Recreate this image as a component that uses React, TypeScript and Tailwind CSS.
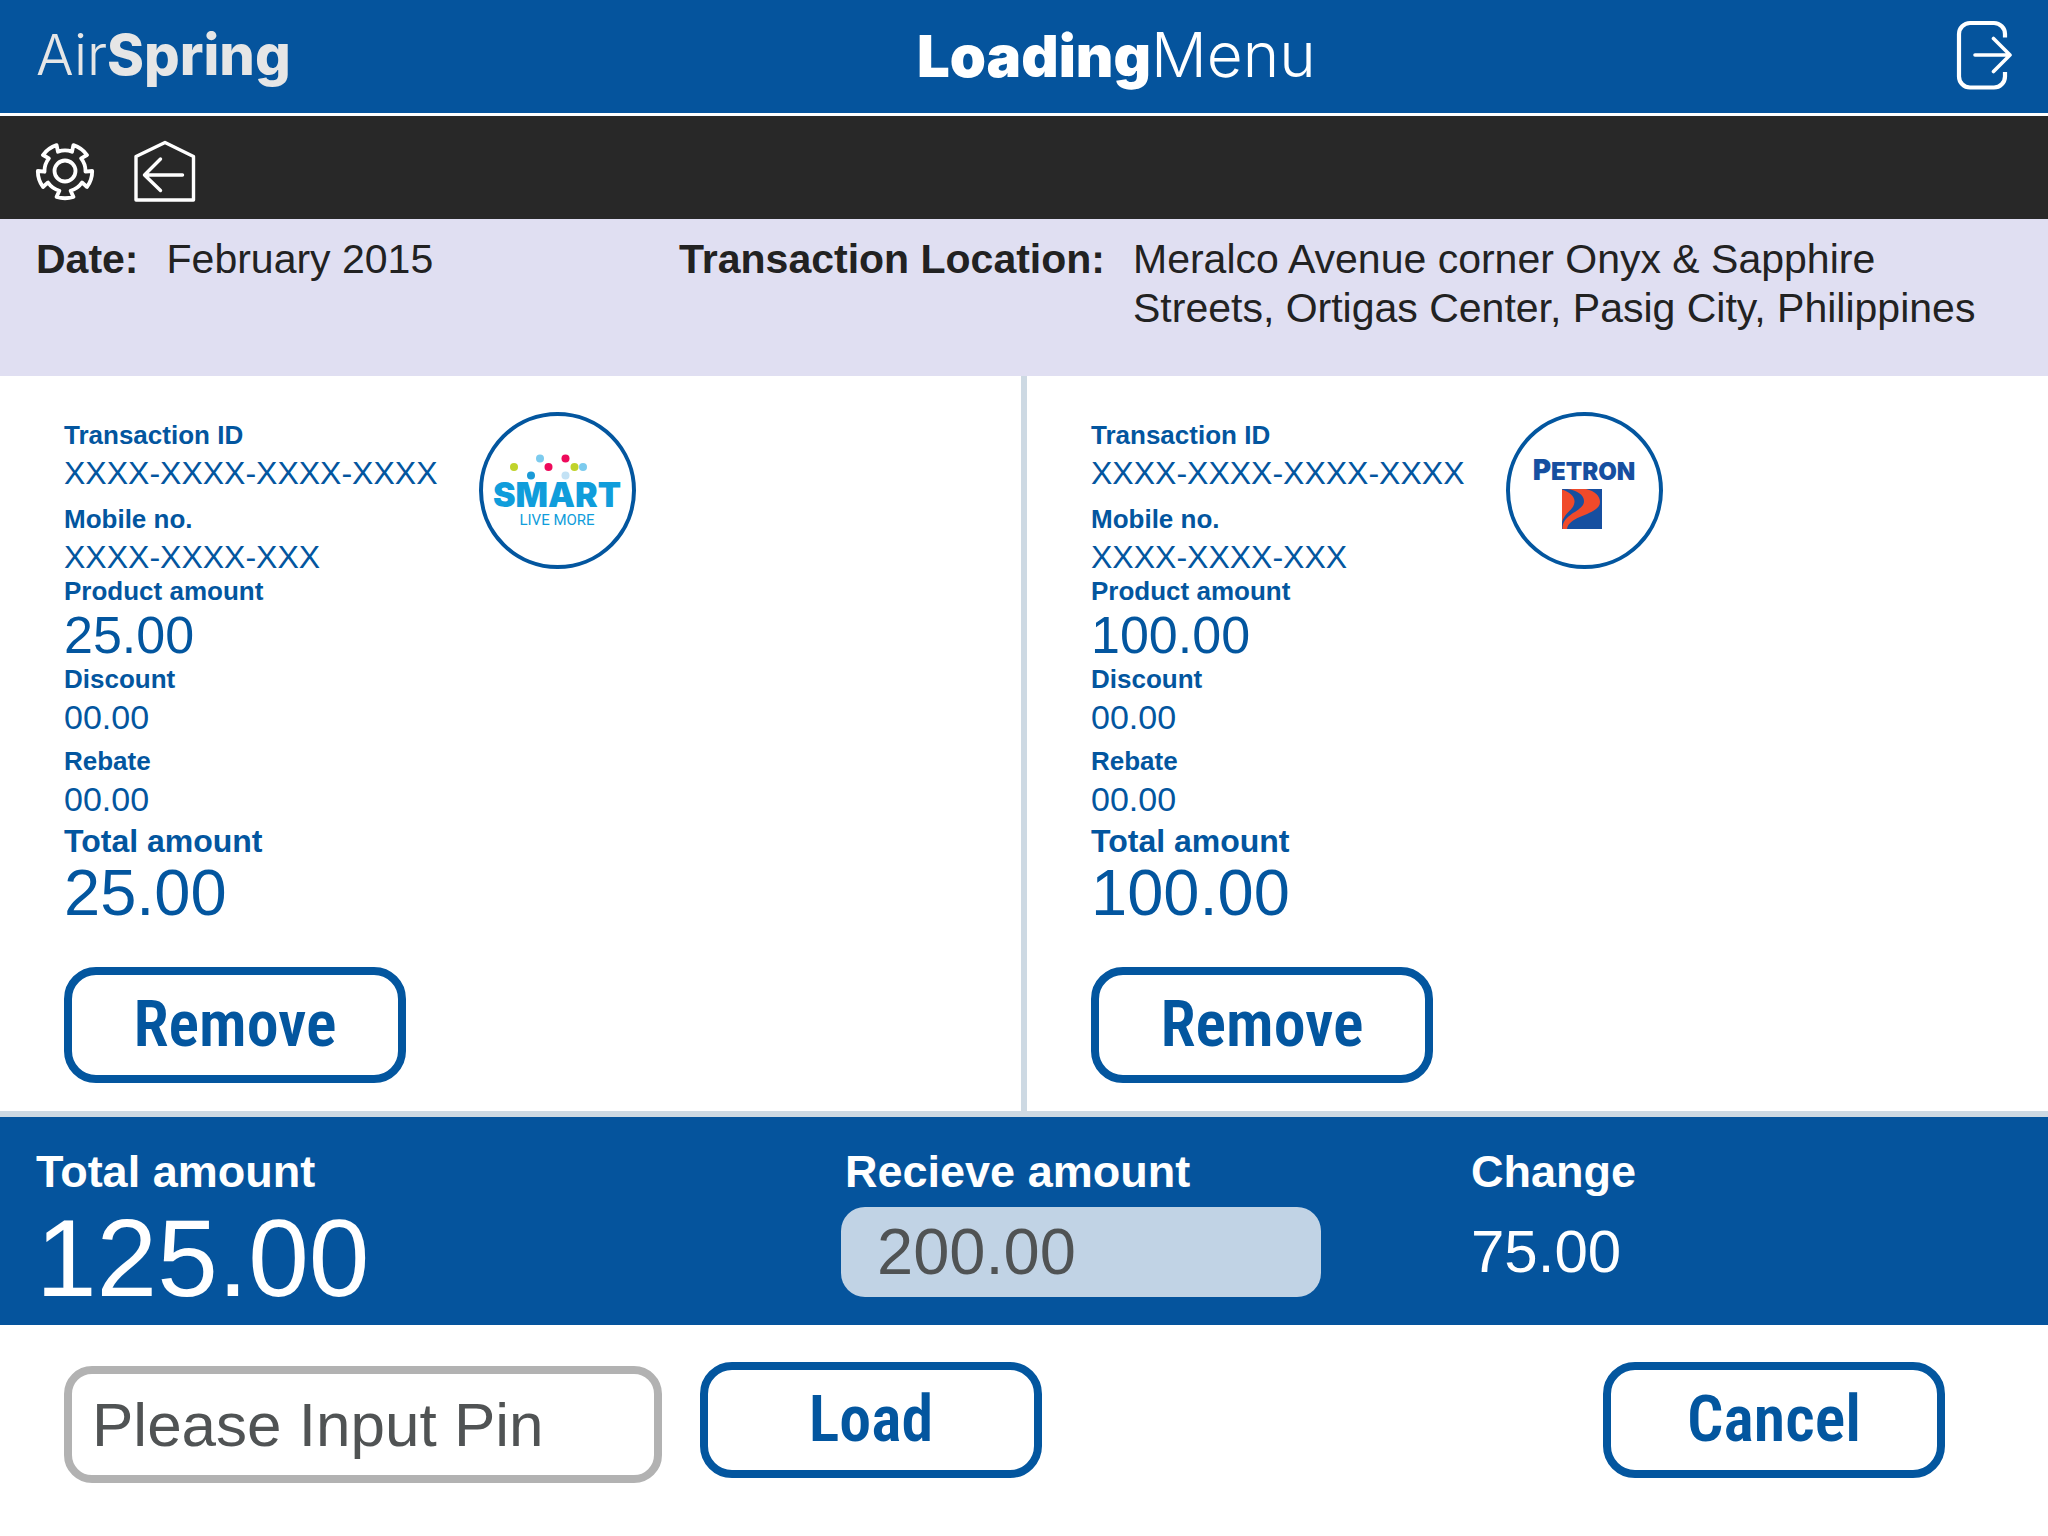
import React from "react";

type Transaction = {
  id: string;
  mobile: string;
  product: string;
  discount: string;
  rebate: string;
  total: string;
  Logo: () => React.ReactElement;
};

function polar(radius: number, degrees: number) {
  const a = (degrees * Math.PI) / 180;
  return `${(30 + radius * Math.cos(a)).toFixed(2)} ${(30 + radius * Math.sin(a)).toFixed(2)}`;
}

const gearOutline =
  [90, 162, 234, 306, 18]
    .map(
      (c, i) =>
        `${i === 0 ? "M" : "A20.5 20.5 0 0 1"} ${polar(20.5, c - 16)} L${polar(27.2, c - 18)} A27.2 27.2 0 0 1 ${polar(27.2, c + 18)} L${polar(20.5, c + 16)}`,
    )
    .join(" ") + ` A20.5 20.5 0 0 1 ${polar(20.5, 74)} Z`;

function GearIcon() {
  return (
    <svg viewBox="0 0 60 60" className="size-[60px]" fill="none" stroke="white" strokeWidth="3.8" strokeLinejoin="round" aria-hidden="true">
      <path d={gearOutline} />
      <circle cx="30" cy="30" r="10.5" />
    </svg>
  );
}

function HomeBackIcon() {
  return (
    <svg viewBox="0 0 62 62" className="size-[62px]" fill="none" stroke="white" strokeWidth="3.4" strokeLinejoin="round" strokeLinecap="round" aria-hidden="true">
      <path d="M2 16.5 31 2.5 59.5 16.5V60H2Z" />
      <path d="M26.5 19 10.5 35 26.5 50.5M11 35H48.5" />
    </svg>
  );
}

function ExitIcon() {
  return (
    <svg viewBox="0 0 56 70" className="h-[70px] w-[56px]" fill="none" stroke="white" aria-hidden="true">
      <path strokeWidth="4.2" d="M49 17.5V14A11 11 0 0 0 38 3H14A11 11 0 0 0 3 14V56.5A11 11 0 0 0 14 67.5H38A11 11 0 0 0 49 56.5V52" />
      <path strokeWidth="3.6" strokeLinecap="round" strokeLinejoin="round" d="M19 35H53.5M37.5 18.5 54 35 37.5 51.5" />
    </svg>
  );
}

function SmartLogo() {
  return (
    <svg viewBox="0 0 157 157" className="size-[157px] shrink-0" role="img" aria-label="Smart Live More">
      <circle cx="78.5" cy="78.5" r="76.5" fill="white" stroke="#03569f" strokeWidth="4" />
      <circle cx="35" cy="55" r="4" fill="#c0d32b" />
      <circle cx="61" cy="46.5" r="4" fill="#7ccbee" />
      <circle cx="69.5" cy="55" r="4" fill="#ee0a5b" />
      <circle cx="86.5" cy="46.5" r="4" fill="#ee0a5b" />
      <circle cx="95.5" cy="55" r="4" fill="#c0d32b" />
      <circle cx="104" cy="55" r="4" fill="#7ccbee" />
      <circle cx="52" cy="63.5" r="4" fill="#1a9ad7" />
      <circle cx="86.5" cy="63.5" r="4" fill="#c3e2f5" />
      <text x="78" y="94.5" textAnchor="middle" fontFamily="Inter, sans-serif" fontWeight="900" fontSize="34" fill="#109ddb">
        SMART
      </text>
      <text x="78" y="112.5" textAnchor="middle" fontFamily="Roboto, sans-serif" fontSize="15" fill="#109ddb">
        LIVE MORE
      </text>
    </svg>
  );
}

function PetronLogo() {
  return (
    <svg viewBox="0 0 157 157" className="size-[157px] shrink-0" role="img" aria-label="Petron">
      <circle cx="78.5" cy="78.5" r="76.5" fill="white" stroke="#03569f" strokeWidth="4" />
      <text x="78" y="67.5" textAnchor="middle" fontFamily="Inter, sans-serif" fontWeight="900" fontSize="24" fill="#164fa0">
        <tspan fontSize="28">P</tspan>ETRON
      </text>
      <rect x="56" y="77" width="40" height="40" fill="#164fa0" />
      <path fill="#f04a2a" d="M56 77.5C64 80 69 85 68.5 90C68 98 59 100 56 110Z" />
      <path fill="#f04a2a" d="M61 77H80C89 79 94 84 94 90C94 103 63 103 61 117H56.5C56 101 78 100 78 89C78 83 71 78 61 77Z" />
    </svg>
  );
}

const transactions: Transaction[] = [
  { id: "XXXX-XXXX-XXXX-XXXX", mobile: "XXXX-XXXX-XXX", product: "25.00", discount: "00.00", rebate: "00.00", total: "25.00", Logo: SmartLogo },
  { id: "XXXX-XXXX-XXXX-XXXX", mobile: "XXXX-XXXX-XXX", product: "100.00", discount: "00.00", rebate: "00.00", total: "100.00", Logo: PetronLogo },
];

function OutlineButton({ children }: { children: React.ReactNode }) {
  return (
    <button
      type="button"
      className="h-[116px] w-[342px] rounded-[32px] border-8 border-[#03569f] bg-white font-['Roboto_Condensed',Roboto,sans-serif] text-[64px] leading-none font-semibold text-[#03569f]"
    >
      {children}
    </button>
  );
}

function Detail({ label, children }: { label: string; children: React.ReactNode }) {
  return (
    <div className="flex flex-col gap-1.5">
      <dt className="text-[26px] leading-[30px] font-bold">{label}</dt>
      {children}
    </div>
  );
}

function TransactionCard({ item }: { item: Transaction }) {
  const { Logo } = item;
  return (
    <article className="flex-1 px-16 pt-9 pb-7 text-[#03569f]">
      <div className="flex items-start">
        <dl className="w-[415px] pt-2">
          <div className="flex flex-col gap-3.5 pb-0.5">
            <Detail label="Transaction ID">
              <dd className="text-[32px] leading-[34px]">{item.id}</dd>
            </Detail>
            <Detail label="Mobile no.">
              <dd className="text-[32px] leading-[34px]">{item.mobile}</dd>
            </Detail>
          </div>
          <div>
            <dt className="text-[26px] leading-[30px] font-bold">Product amount</dt>
            <dd className="text-[52px] leading-[58px]">{item.product}</dd>
          </div>
          <div className="flex flex-col gap-3">
            <Detail label="Discount">
              <dd className="text-[34px] leading-[34px]">{item.discount}</dd>
            </Detail>
            <Detail label="Rebate">
              <dd className="text-[34px] leading-[34px]">{item.rebate}</dd>
            </Detail>
          </div>
          <div className="pt-1.5">
            <dt className="text-[32px] leading-[38px] font-bold">Total amount</dt>
            <dd className="text-[65px] leading-[66px]">{item.total}</dd>
          </div>
        </dl>
        <Logo />
      </div>
      <div className="mt-[41px]">
        <OutlineButton>Remove</OutlineButton>
      </div>
    </article>
  );
}

export default function App() {
  return (
    <div className="min-h-screen bg-white font-['Liberation_Sans',sans-serif]">
      <header className="grid grid-cols-[881fr_1095fr] items-center border-b-[3px] border-white bg-[#05549d] px-9 pt-5 pb-[23px] font-['Inter',sans-serif]">
        <p className="text-[56px] leading-[70px] text-[#e6e6e6]">
          <span className="font-light">Air</span>
          <span className="font-extrabold">Spring</span>
        </p>
        <div className="flex items-center justify-between">
          <h1 className="flex items-baseline leading-[64px] text-white">
            <span className="text-[58px] font-black">Loading</span>
            <span className="text-[62px] font-light">Menu</span>
          </h1>
          <button type="button" aria-label="Log out">
            <ExitIcon />
          </button>
        </div>
      </header>

      <nav className="flex items-center gap-[39px] bg-[#282828] px-[35px] pt-6 pb-[17px]">
        <button type="button" aria-label="Settings">
          <GearIcon />
        </button>
        <button type="button" aria-label="Back to home">
          <HomeBackIcon />
        </button>
      </nav>

      <section className="grid grid-cols-[643fr_1333fr] bg-[#e0dff2] px-9 pt-4 pb-[43px] text-[41px] leading-[49px] text-[#222222]">
        <p className="flex gap-7">
          <span className="font-bold">Date:</span>
          <span>February 2015</span>
        </p>
        <p className="flex gap-7">
          <span className="font-bold whitespace-nowrap">Transaction Location:</span>
          <span>
            Meralco Avenue corner Onyx &amp; Sapphire
            <br />
            Streets, Ortigas Center, Pasig City, Philippines
          </span>
        </p>
      </section>

      <main className="flex border-b-[6px] border-[#cdd9e3]">
        <TransactionCard item={transactions[0]} />
        <div className="w-1.5 bg-[#cdd9e3]" />
        <TransactionCard item={transactions[1]} />
      </main>

      <section className="grid grid-cols-[805fr_630fr_541fr] bg-[#05549d] px-9 pt-[30px] pb-[15px] text-white">
        <div>
          <h2 className="text-[45px] leading-[50px] font-bold">Total amount</h2>
          <p className="mt-2.5 text-[109px] leading-[103px]">125.00</p>
        </div>
        <div>
          <label htmlFor="received" className="block pl-1 text-[45px] leading-[50px] font-bold">
            Recieve amount
          </label>
          <input
            id="received"
            defaultValue="200.00"
            className="mt-2.5 block h-[90px] w-[480px] rounded-3xl bg-[#c1d3e5] px-9 text-[65px] text-[#505354]"
          />
        </div>
        <div>
          <h2 className="text-[45px] leading-[50px] font-bold">Change</h2>
          <p className="mt-2.5 text-[60px] leading-[90px]">75.00</p>
        </div>
      </section>

      <footer className="flex items-start pt-[37px] pr-[103px] pb-[52px] pl-16">
        <input
          type="text"
          aria-label="Please Input Pin"
          placeholder="Please Input Pin"
          className="mt-1 mr-[38px] h-[117px] w-[598px] rounded-[28px] border-8 border-[#b2b2b2] bg-white px-5 text-[62px] text-[#505354] placeholder:text-[#505354]"
        />
        <OutlineButton>Load</OutlineButton>
        <div className="ml-auto">
          <OutlineButton>Cancel</OutlineButton>
        </div>
      </footer>
    </div>
  );
}
